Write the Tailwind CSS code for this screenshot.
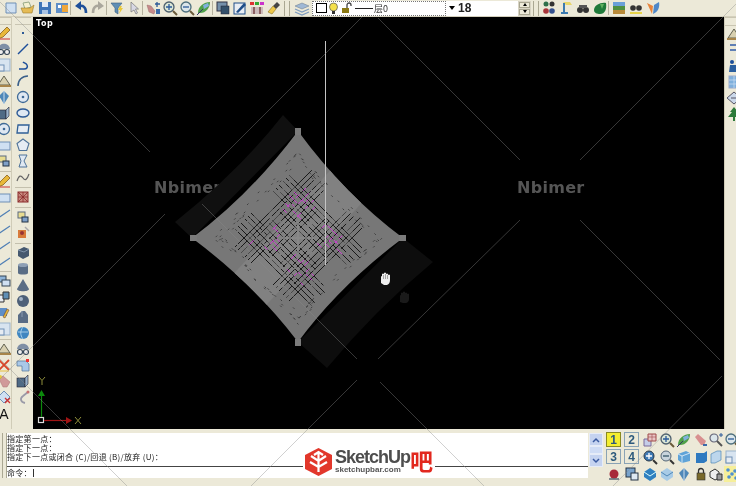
<!DOCTYPE html>
<html lang="en">
<head>
<meta charset="UTF-8">
<title>CAD</title>
<script src="https://cdn.jsdelivr.net/npm/@tailwindcss/browser@4"></script>
</head>
<body class="bg-[#ece9d8]">
<div class="relative w-[736px] h-[486px] overflow-hidden flex flex-col bg-[#ece9d8] font-['Liberation_Sans',sans-serif] blur-[0.4px]">

  <!-- top toolbar -->
  <div class="h-[17px] flex items-center pl-[2px] border-b border-[#d4d0bd]">
    <div id="t1" class="flex"></div><div class="w-[2px] h-[14px] border-l border-[#b5b19e] border-r-white"></div>
    <div id="t2" class="flex"></div><div class="w-[2px] h-[14px] border-l border-[#b5b19e]"></div>
    <div id="t3" class="flex"></div><div class="w-[2px] h-[14px] border-l border-[#b5b19e]"></div>
    <div id="t4" class="flex"></div><div class="w-[2px] h-[14px] border-l border-[#b5b19e]"></div>
    <div id="t5" class="flex"></div>
    <div class="w-[2px]"></div>
    <div class="w-[6px] h-[15px] border-x border-[#aaa792]"></div>
    <div class="w-[3px]"></div>
    <div id="t6" class="flex"></div>
    <div class="w-[2px]"></div>
    <div class="w-[134px] h-[15px] flex items-center bg-white border border-dotted border-[#777] pl-[3px] gap-[1px]">
      <span class="w-[11px] h-[10px] bg-white border border-black"></span>
      <svg class="w-[11px] h-[13px]" viewBox="0 0 11 13"><circle cx="5.5" cy="5" r="4" fill="#f4e04a" stroke="#555" stroke-width=".7"/><rect x="4" y="9" width="3" height="3" fill="#333"/></svg>
      <svg class="w-[12px] h-[12px] ml-[1px]" viewBox="0 0 12 12"><rect x="1" y="6" width="7" height="5" fill="#8c7a14"/><path d="M6 6V3a2 2 0 0 1 4 0v1" fill="none" stroke="#444" stroke-width="1.3"/></svg>
      <span class="w-[18px] h-px bg-[#222] ml-[1px]"></span>
      <span class="text-[9px] leading-none text-[#333] font-['Noto_Sans_CJK_SC',sans-serif]">层0</span>
    </div>
    <div class="w-[72px] h-[15px] flex items-center bg-white pl-[3px] gap-[3px]">
      <span class="w-0 h-0 border-x-[3px] border-x-transparent border-t-[4px] border-t-black"></span>
      <span class="text-[12px] leading-none font-bold text-[#222]">18</span>
    </div>
    <div class="w-[13px] h-[15px] flex flex-col gap-px bg-[#d8d4c4] p-px">
      <span class="flex-1 flex items-center justify-center bg-[#ece9d8] border border-[#aaa792]"><span class="w-0 h-0 border-x-[2px] border-x-transparent border-b-[3px] border-b-black"></span></span>
      <span class="flex-1 flex items-center justify-center bg-[#ece9d8] border border-[#aaa792]"><span class="w-0 h-0 border-x-[2px] border-x-transparent border-t-[3px] border-t-black"></span></span>
    </div>
    <div class="w-[2px]"></div>
    <div class="w-[6px] h-[15px] border-x border-[#aaa792]"></div>
    <div class="w-px"></div>
    <div id="t7" class="flex"></div><div class="w-[2px] h-[14px] border-l border-[#b5b19e]"></div>
    <div id="t8" class="flex"></div>
  </div>

  <!-- middle -->
  <div class="h-[412px] flex">
    <div class="w-[33px] flex">
      <div class="w-[11px] overflow-hidden flex flex-col">
        <div class="h-[8px] border-y border-[#c9c5b2] shrink-0"></div>
        <div id="l1" class="flex flex-col -ml-[4px] w-[16px]"></div>
      </div>
      <div class="w-[4px] border-l border-[#d0ccb8]"></div>
      <div class="w-[16px] flex flex-col">
        <div class="h-[8px] border-y border-[#c9c5b2] shrink-0"></div>
        <div id="l2" class="flex flex-col"></div>
      </div>
    </div>
    <div class="relative flex-1 bg-black overflow-hidden">
      <span class="absolute left-[3px] top-[1px] text-[8px] leading-[11px] font-bold tracking-[0.5px] text-white font-['DejaVu_Sans',sans-serif]">Top</span>
      <span class="absolute left-[121px] top-[162px] text-[16px] leading-[18px] font-['DejaVu_Sans',sans-serif] font-bold tracking-[0.3px] text-[#555]">Nbimer</span>
      <span class="absolute left-[484px] top-[162px] text-[16px] leading-[18px] font-['DejaVu_Sans',sans-serif] font-bold tracking-[0.3px] text-[#555]">Nbimer</span>
      <svg id="art" class="absolute left-[-33px] top-[-17px]" width="736" height="486" viewBox="0 0 736 486">
        <defs><clipPath id="sheet"><path d="M298 131Q345 195 403 238 340 285 298 342 255 285 192 238 250 195 298 131Z"/></clipPath></defs>
        <path d="M283 115Q240 170 175 222L192 238 298 131Z" fill="#101010"/>
        <path d="M403 238 433 262Q375 310 327 368L298 342Z" fill="#0d0d0d"/>
        <path d="M298 131Q345 195 403 238 340 285 298 342 255 285 192 238 250 195 298 131Z" fill="#777"/>
        <path d="M340 160 372 192 256 316 224 284Z" fill="#818181" clip-path="url(#sheet)"/>
        <g id="hatch"></g>
        <g fill="#7b7b7b"><rect x="295" y="128" width="6" height="7"/><rect x="295" y="339" width="6" height="7"/><rect x="190" y="235" width="7" height="6"/><rect x="399" y="235" width="7" height="6"/></g>
        <line x1="325.500" y1="41" x2="325.500" y2="265" stroke="#c4c4c4" stroke-width="1"/>
        <path d="M381 283v-6q0-1 1-1v-2q1-1 2 0v-1q1-1 2 0v1q1-1 2 0v1q1-1 2 0v5q0 4-3 5h-3z" fill="#eee"/>
        <path d="M383.500 275v4M385.500 274v5M387.500 275v4" stroke="#777" stroke-width=".6"/>
        <path d="M400 302v-6q0-1 1-1v-2q1-1 2 0v-1q1-1 2 0v1q1-1 2 0v1q1-1 2 0v5q0 3-3 4h-3z" fill="#1a1a1a"/>
        <g fill="none">
          <rect x="38.500" y="417.500" width="5" height="5" stroke="#ddd" stroke-width="1.200"/>
          <path d="M41.500 417V394" stroke="#0c8a0c" stroke-width="1.200"/><path d="M38 396l3.500-6 3.500 6z" fill="#0c8a0c"/>
          <path d="M44 420.500H68" stroke="#a01414" stroke-width="1.200"/><path d="M66 417l6 3.500-6 3.500z" fill="#a01414"/>
          <path d="M39 377l3 3.500 3-3.500M42 380.500V385M75 417l6 7M81 417l-6 7" stroke="#8d8d3a" stroke-width="1"/>
        </g>
      </svg>
    </div>
    <div class="w-[12px] flex flex-col border-l border-[#d0ccb8]">
      <div class="h-[9px] border-y border-[#c9c5b2] shrink-0"></div>
      <div id="r1" class="flex flex-col pl-px"></div>
    </div>
  </div>

  <!-- bottom -->
  <div class="h-[57px] flex">
    <div class="w-[588px] pt-[4px] pl-[2px] flex shrink-0">
      <div class="w-[5px] h-[45px] border-x border-[#aaa792]"></div>
      <div class="flex-1 h-[45px] flex flex-col bg-white text-[8px] leading-[9px] tracking-[0.3px] text-[#222] font-['Noto_Sans_CJK_SC',sans-serif]">
        <div class="h-[34px] pt-px border-b border-[#444]">
          <div>指定第一点：</div><div>指定下一点：</div><div>指定下一点或闭合 (C)/回退 (B)/放弃 (U)：</div>
        </div>
        <div class="flex items-center h-[11px]"><span>命令：</span><span class="w-px h-[8px] bg-[#333] ml-px"></span></div>
      </div>
    </div>
    <div class="w-[16px] pt-[4px] pl-[1px]">
      <div class="w-[14px] h-[34px] flex flex-col items-center justify-between bg-[#e6ecf8] py-[1px]">
        <span class="w-[12px] h-[11px] flex items-center justify-center bg-[#c5d3f0]"><svg class="w-[8px] h-[6px]" viewBox="0 0 8 6"><path d="M1 5l3-3 3 3" fill="none" stroke="#3a5aa0" stroke-width="1.500"/></svg></span>
        <span class="w-[12px] h-[6px] bg-[#cfdcf5]"></span>
        <span class="w-[12px] h-[11px] flex items-center justify-center bg-[#c5d3f0]"><svg class="w-[8px] h-[6px]" viewBox="0 0 8 6"><path d="M1 1l3 3 3-3" fill="none" stroke="#3a5aa0" stroke-width="1.500"/></svg></span>
      </div>
    </div>
    <div class="flex-1 pt-[3px] pl-[3px] grid grid-cols-[18px_18px_17px_17px_17px_15px_16px_16px] grid-rows-[17px_17px_17px]" id="grid"></div>
  </div>

  <!-- logo over the command window -->
  <div class="absolute left-[303px] top-[447px] flex items-start bg-white pr-[2px]">
    <svg class="w-[31px] h-[30px]" viewBox="0 0 31 30">
      <path d="M15.500 1 29 8v14l-13.500 7L2 22V8z" fill="#e2372b"/>
      <path d="M15.500 5v20M8 9l7.500 5L23 9M7 15l8.500 5L24 15M11 8l4.500-3 4.500 3" fill="none" stroke="#fff" stroke-width="2.200"/>
    </svg>
    <div class="flex flex-col w-[75px] ml-[1px] mt-[1px]">
      <span class="text-[18px] leading-[18px] font-bold tracking-[-1px] text-[#4d4d4d]">SketchUp</span>
      <span class="text-[8px] leading-[8px] font-bold text-[#555]">sketchupbar.com</span>
    </div>
    <span class="text-[23px] leading-[27px] font-bold text-[#e2281e] font-['Noto_Sans_CJK_SC',sans-serif]">吧</span>
  </div>

  <svg id="marks" class="absolute left-0 top-0 pointer-events-none" width="736" height="486" viewBox="0 0 736 486" stroke="#8a8a8a" stroke-opacity=".5" stroke-width=".8" fill="none">
    <path d="M0 2 150 152M202 204 357 359M380 382 484 486M0 379 165 214M210 169 362 17M378 18 520 160M580 220 720 360M740 0 580 160M520 220 378 359M357 380 251 486M722 376 613 486M0 359 127 486"/>
  </svg>
</div>

<script>
const ic = {
  page: '<path d="M3 3h10v10H3z" fill="#cfe0f2" stroke="#6f8fb5"/>',
  open: '<path d="M3 3l6-1 2 5-6 2z" fill="#f4f0d0" stroke="#9a8"/><path d="M1 8h9l4-3-2 8H3z" fill="#e5bb55" stroke="#9a7a2a" stroke-width=".6"/>',
  save: '<rect x="2" y="2" width="12" height="12" fill="#3d74b8"/><rect x="5" y="2" width="6" height="5" fill="#dfe9f5"/><rect x="5" y="10" width="6" height="4" fill="#a9c3e2"/>',
  plot: '<rect x="2" y="3" width="12" height="10" fill="#5f8fc8"/><rect x="8" y="5" width="6" height="7" fill="#eea63a"/><rect x="4" y="5" width="3" height="3" fill="#fff"/>',
  undo: '<path d="M13 13C13 7 10 5 6 6" fill="none" stroke="#1d4f9a" stroke-width="2.600"/><path d="M8 1v9L2 6z" fill="#1d4f9a"/>',
  redo: '<path d="M3 13C3 7 6 5 10 6" fill="none" stroke="#aaa79c" stroke-width="2.600"/><path d="M8 1v9l6-4z" fill="#aaa79c"/>',
  funnel: '<path d="M2 3h11L9 8v6L6 12V8z" fill="#5f8fb5" stroke="#3d5f80" stroke-width=".6"/><path d="M11 6l-2 4h2l-1 4 4-6h-2l1-2z" fill="#e8c93a"/>',
  arrow: '<path d="M5 2v10l3-2 2 4 1.500-1-2-4h3z" fill="#d8d8e4" stroke="#777" stroke-width=".7"/>',
  hand: '<path d="M2 5l4 1 4 5-1 3-5-2z" fill="#c78a8a" stroke="#9a6a6a" stroke-width=".5"/><path d="M11 9h4v5h-4z" fill="#3b6aa8"/><path d="M12 2v5M10 4h5" stroke="#2d5a96" stroke-width="1.300"/>',
  zoomw: '<circle cx="7" cy="7" r="5" fill="#dbe6d6" stroke="#4d5f6d" stroke-width="1.300"/><path d="M11 11l4 4" stroke="#6a5a3a" stroke-width="2"/><path d="M7 4v6M4 7h6" stroke="#2b5a9a" stroke-width="1.300"/>',
  zoomm: '<circle cx="7" cy="7" r="5" fill="#dbe6ea" stroke="#4d6f7d" stroke-width="1.300"/><path d="M11 11l4 4" stroke="#6a5a3a" stroke-width="2"/><path d="M4 7h6" stroke="#2b5a9a" stroke-width="1.300"/>',
  leaf: '<path d="M2 13C2 6 8 2 14 2c0 6-4 11-10 11z" fill="#4fa04a"/><path d="M7 5l5-2 1 3-5 3z" fill="#7fb0dd"/><path d="M1 15 7 9" stroke="#336" stroke-width="1"/>',
  props: '<rect x="2" y="2" width="10" height="9" fill="#7590ab" stroke="#334"/><rect x="6" y="6" width="8" height="8" fill="#34506b" stroke="#223" stroke-width=".5"/>',
  edit: '<rect x="2" y="3" width="11" height="11" fill="#e8edf4" stroke="#1f4e88"/><path d="M4 12l8-9 2 2-8 8z" fill="#1f4e88"/>',
  color: '<g><rect x="1" y="2" width="4" height="3" fill="#d33"/><rect x="6" y="2" width="4" height="3" fill="#3a3"/><rect x="11" y="2" width="4" height="3" fill="#c3c"/></g><path d="M2 7h12v7H2z" fill="#cbb"/><path d="M5 7v7M11 7v7" stroke="#744" stroke-width="1.500"/>',
  brush: '<path d="M11 2l3 3-4 4-3-3z" fill="#444"/><path d="M7 6l3 3-4 5-4-2z" fill="#eec84a" stroke="#8a7020" stroke-width=".6"/>',
  layers: '<path d="M8 3l7 3-7 3-7-3z" fill="#9fb8d5" stroke="#678" stroke-width=".5"/><path d="M1 9l7 3 7-3M1 12l7 3 7-3" fill="none" stroke="#7f9cbf" stroke-width="1.300"/>',
  balls: '<circle cx="5" cy="4" r="2.500" fill="#2f6f4a"/><circle cx="11" cy="4" r="2.500" fill="#333"/><circle cx="5" cy="11" r="2.800" fill="#a8343a"/><circle cx="11" cy="11" r="2.800" fill="#33508f"/>',
  lamp: '<path d="M5 2h7l2 3H8z" fill="#e8d66a"/><path d="M6 3v9M3 13h7" stroke="#3b7ab0" stroke-width="2"/>',
  bino: '<circle cx="5" cy="10" r="3" fill="#333"/><circle cx="11" cy="10" r="3" fill="#333"/><rect x="4" y="5" width="8" height="3" fill="#555"/>',
  bush: '<path d="M2 10c0-5 7-8 12-7 1 6-1 11-6 11-3 0-6-1-6-4z" fill="#1f7a3a"/><path d="M8 4l4 0-2 5z" fill="#5fb060"/>',
  land: '<rect x="2" y="2" width="12" height="4" fill="#6aa0d8"/><rect x="2" y="6" width="12" height="4" fill="#4f9040"/><rect x="2" y="10" width="12" height="4" fill="#b88a3a"/>',
  binoy: '<circle cx="5" cy="8" r="2.800" fill="#333"/><circle cx="11" cy="8" r="2.800" fill="#333"/><path d="M2 13h12" stroke="#e8d44a" stroke-width="2"/>',
  wing: '<path d="M2 3l5 11 1-8z" fill="#e8843a"/><path d="M8 14l1-9 5-3c1 5-1 10-6 12z" fill="#4f88c8"/>',
  pt: '<rect x="7" y="7" width="2" height="2" fill="#2d5a96"/>',
  line: '<path d="M3 13 13 3" stroke="#1d4f9a" stroke-width="1.500"/>',
  pline: '<path d="M4 12h5c3 0 4-2 3-4s-3-2-4-3" fill="none" stroke="#1d4f9a" stroke-width="1.500"/>',
  arc: '<path d="M3 13C3 7 7 3 13 3" fill="none" stroke="#3a5f8a" stroke-width="1.500"/>',
  circle: '<circle cx="8" cy="8" r="5.500" fill="#dfe8f2" stroke="#3f6a96" stroke-width="1.300"/><circle cx="8" cy="8" r="1.300" fill="#3f6a96"/>',
  ell: '<ellipse cx="8" cy="8" rx="6" ry="4" fill="#dfe8f2" stroke="#2d5a96" stroke-width="1.400"/>',
  rect: '<path d="M3 4h11l-1 8H2z" fill="#e6ecf3" stroke="#2f5f96" stroke-width="1.300"/>',
  poly: '<path d="M8 2l6 4.500-2.300 7H4.300L2 6.500z" fill="#e6ecf3" stroke="#4f7399" stroke-width="1.100"/>',
  spl: '<path d="M4 2h8L9 8l3 6H4l2-6z" fill="#dfe8f2" stroke="#4f7399" stroke-width="1"/>',
  wave: '<path d="M2 12c2-6 4-6 6-3s4 2 6-4" fill="none" stroke="#666" stroke-width="1.200"/>',
  hatchi: '<rect x="3" y="3" width="10" height="10" fill="#c88a80" stroke="#8a2a2a"/><path d="M3 8h10M8 3v10M3 3l10 10M13 3 3 13" stroke="#8a2a2a" stroke-width=".8"/>',
  blk: '<rect x="3" y="3" width="7" height="6" fill="#e8dc90" stroke="#5a6a80"/><rect x="7" y="8" width="6" height="5" fill="#7fa0c8" stroke="#234"/>',
  ins: '<rect x="3" y="5" width="8" height="8" fill="#d87a3a"/><circle cx="7" cy="8" r="2" fill="#933"/><path d="M10 2l4 4" stroke="#aaa" stroke-width="1.500"/>',
  box: '<path d="M3 5l6-3 5 2v7l-6 3-5-3z" fill="#45586f"/><path d="M3 5l6 2 5-3" fill="none" stroke="#7f93aa"/>',
  cyl: '<path d="M3 4h10v8c0 2-10 2-10 0z" fill="#5a6d85"/><ellipse cx="8" cy="4" rx="5" ry="2" fill="#8fa0b5"/>',
  cone: '<path d="M8 2l6 10c0 3-12 3-12 0z" fill="#5a6d85"/>',
  sph: '<circle cx="8" cy="8" r="6" fill="#4d6078"/><circle cx="6" cy="6" r="2" fill="#a5b5c8"/>',
  wedge: '<path d="M3 14V6l4-4h3l3 4v8z" fill="#5a6d85"/><path d="M7 2v6" stroke="#8a9bb0"/>',
  globe: '<circle cx="8" cy="8" r="6" fill="#3f86c0"/><path d="M3 7h10M8 2c-3 4-3 8 0 12" stroke="#bcdcf0" fill="none" stroke-width=".8"/>',
  rings: '<path d="M2 8c1-7 11-7 12 0" fill="#7f8fa5"/><circle cx="5" cy="11" r="2.500" fill="#eee" stroke="#345" stroke-width="1.100"/><circle cx="11" cy="11" r="2.500" fill="#eee" stroke="#345" stroke-width="1.100"/>',
  corner: '<path d="M2 4h9l3 3v7H7V9H2z" fill="#a9c8e8" stroke="#4f7399" stroke-width=".7"/><rect x="11" y="2" width="3" height="3" fill="#e33"/>',
  cube2: '<rect x="2" y="5" width="8" height="9" fill="#4f6a85" stroke="#223" stroke-width=".6"/><path d="M10 5l3-3v9l-3 3z" fill="#9ab3cc" stroke="#223" stroke-width=".6"/>',
  hook: '<path d="M13 3 8 7c-3 2-3 6 2 7" fill="none" stroke="#9a9aa8" stroke-width="1.800"/><circle cx="13" cy="3" r="1.500" fill="#c87070"/>',
  pencil: '<path d="M2 14l2-5 7-7 3 3-7 7z" fill="#e8b83a" stroke="#7a4f10" stroke-width=".7"/><path d="M2 14h12" stroke="#c33" stroke-width="1"/>',
  dim: '<rect x="2" y="5" width="12" height="8" fill="#cfe0f2" stroke="#6f8fb5"/>',
  arcs: '<path d="M2 13 14 5" stroke="#4f7fb5" stroke-width="1.200"/>',
  copy: '<rect x="2" y="3" width="8" height="6" fill="#8fb4d8" stroke="#345"/><rect x="6" y="7" width="8" height="6" fill="#cfe0f2" stroke="#345"/>',
  cubes: '<path d="M2 6h6v7H2z" fill="#e6ecf3" stroke="#333"/><path d="M7 3h6v7H7z" fill="#5f8fb5" stroke="#333"/>',
  yellowp: '<rect x="2" y="3" width="9" height="8" fill="#5f8fc8"/><path d="M7 12l4-8 2 1-4 8z" fill="#e8b83a" stroke="#533" stroke-width=".5"/>',
  boxes: '<rect x="2" y="2" width="12" height="12" fill="#d8e4f0" stroke="#9ab3cc"/><rect x="2" y="8" width="6" height="6" fill="#e6ecf3" stroke="#6f8fb5"/>',
  hat: '<path d="M2 12 8 3l6 9z" fill="#d8d0b0" stroke="#554" stroke-width=".9"/><path d="M1 13h14" stroke="#a8854a" stroke-width="2"/>',
  xx: '<path d="M3 3l10 10M13 3 3 13" stroke="#d8462a" stroke-width="1.800"/><path d="M3 14h10" stroke="#e8c040" stroke-width="1"/>',
  erase: '<path d="M3 6l4-3 7 6-3 5H7z" fill="#d09a9a" stroke="#a87070" stroke-width=".5"/><circle cx="4" cy="4" r="2" fill="#e8c83a"/>',
  diax: '<path d="M8 2l6 6-6 6-6-6z" fill="#cfe0f2" stroke="#6f8fb5"/><path d="M9 9l5 5M14 9l-5 5" stroke="#c33" stroke-width="1.300"/>',
  aa: '<text x="8" y="14" text-anchor="middle" font-size="14" font-family="Liberation Sans" fill="#111">A</text>',
  red: '<circle cx="8" cy="8" r="4.500" fill="#a82a3a"/><path d="M3 13h10" stroke="#456" stroke-width="1.300"/>',
  pic: '<rect x="2" y="2" width="9" height="9" fill="#79a3cc" stroke="#234"/><rect x="7" y="7" width="7" height="7" fill="#dde8f2" stroke="#234"/>',
  dia1: '<path d="M8 2l6 4v5l-6 4-6-4V6z" fill="#2f80c0"/><path d="M2 6l6 4 6-4" fill="none" stroke="#dff"/>',
  dia2: '<path d="M8 2l6 4v5l-6 4-6-4V6z" fill="#a8cbe6"/><path d="M2 6l6 4 6-4" fill="none" stroke="#4f88b8"/>',
  dia3: '<path d="M8 2l5 5-5 8-5-8z" fill="#4f88b8"/><path d="M8 2v13" stroke="#cde"/>',
  lock: '<rect x="4" y="7" width="8" height="7" fill="#7a6a2a" stroke="#333" stroke-width=".6"/><path d="M5.500 7V5a2.500 2.500 0 0 1 5 0v2" fill="none" stroke="#333" stroke-width="1.300"/>',
  wire: '<path d="M2 6l5-3 4 3v6l-4 2-5-3z" fill="#eee" stroke="#333"/><path d="M9 8h5v6H9z" fill="#999" stroke="#333"/>',
  dots: '<circle cx="4" cy="4" r="1.800" fill="#4f90d0"/><circle cx="11" cy="5" r="1.800" fill="#4f90d0"/><circle cx="5" cy="11" r="1.800" fill="#4f90d0"/><circle cx="12" cy="12" r="1.800" fill="#4f90d0"/><circle cx="8" cy="8" r="1.800" fill="#4f90d0"/>',
  cube3: '<path d="M2 5l8-3 4 2v8l-8 2-4-3z" fill="#5fa3d8"/><path d="M6 7l8-3M6 7v7M6 7 2 5" stroke="#fff" fill="none" stroke-width=".7"/>',
  cube4: '<path d="M3 4h8l3-2v10l-3 2H3z" fill="#2f7ac0"/>',
  cube5: '<path d="M3 5l6-3h4v9l-6 3H3z" fill="#bcd6ec" stroke="#4f88b8" stroke-width=".7"/>',
  rcube: '<path d="M2 7h7v7H2z" fill="#c5cde8" stroke="#7a6a9a"/><path d="M6 2h8v7H6z" fill="#e8c5c5" stroke="#a04a4a"/><path d="M10 2v7M6 5h8" stroke="#a04a4a" stroke-width=".6"/>',
  pink: '<path d="M2 5l3-3 8 7-2 4H8z" fill="#d88f8f"/><path d="M10 12h4v2h-4z" fill="#3b6aa8"/>',
  zoomp: '<circle cx="6" cy="6" r="4" fill="#dbe6ea" stroke="#667" stroke-width="1.200"/><path d="M9 9l5 5" stroke="#555" stroke-width="2"/><path d="M13 1v4M11 3h4" stroke="#2b5a9a"/>',
  zoomb: '<circle cx="7" cy="7" r="5" fill="#3f7ab5" stroke="#234"/><path d="M7 4v6M4 7h6" stroke="#fff" stroke-width="1.300"/><path d="M11 11l4 4" stroke="#333" stroke-width="2"/>',
  zoomg: '<circle cx="7" cy="7" r="5" fill="#c8d4dc" stroke="#567"/><path d="M4 7h6" stroke="#356" stroke-width="1.300"/><path d="M11 11l4 4" stroke="#333" stroke-width="2"/>',
  figure: '<circle cx="6" cy="4" r="2" fill="#1d4f9a"/><path d="M4 7h6l2 7H3z" fill="#2b5f9f"/><path d="M11 2v6" stroke="#888" stroke-width="2"/>',
  tile: '<rect x="3" y="2" width="10" height="12" fill="#7fb0dd" stroke="#9ac"/><path d="M3 6h10M3 10h10M8 2v12" stroke="#cfe0f2" stroke-width=".7"/>',
  diamond: '<path d="M8 2l7 6-7 6-7-6z" fill="#cbd8ea" stroke="#556"/><path d="M5 8h6" stroke="#556"/>',
  tree: '<path d="M8 1l4 5h-2l4 5H9v4H7v-4H2l4-5H4z" fill="#2d7a3a"/>',
  dash: '<path d="M4 3h8M4 8h8" stroke="#5f7fb5" stroke-width="2"/>'
};
const svg = n => '<svg class="w-[16px] h-[16px] shrink-0" viewBox="0 0 16 16">' + ic[n] + '</svg>';
const fill = (id, names, cell) => {
  document.getElementById(id).innerHTML = names.map(n => cell(n)).join('');
};
const top17 = n => '<span class="w-[17px] h-[16px] flex justify-center">' + svg(n) + '</span>';
fill('t1', ['page','open','save','plot'], top17);
fill('t2', ['undo','redo'], top17);
fill('t3', ['funnel','arrow'], top17);
fill('t4', ['hand','zoomw','zoomm','leaf'], top17);
fill('t5', ['props','edit','color','brush'], top17);
fill('t6', ['layers'], top17);
fill('t7', ['balls','lamp','bino','bush'], top17);
fill('t8', ['land','binoy','wing'], top17);

// left columns, "|" is a separator
const col = n => n === '|'
  ? '<span class="h-[3px] mb-px border-b border-[#c4c0ad]"></span>'
  : '<span class="h-[16px] flex">' + svg(n) + '</span>';
fill('l1', ['pencil','rings','boxes','hat','dia3','cube2','circle','dim','blk','|','pencil','dim','arcs','arcs','arcs','arcs','|','copy','cubes','yellowp','boxes','|','hat','xx','erase','diax','aa'], col);
fill('l2', ['pt','line','pline','arc','circle','ell','rect','poly','spl','wave','|','hatchi','|','blk','ins','|','box','cyl','cone','sph','wedge','globe','rings','corner','cube2','hook'], col);
fill('r1', ['hat','dash','figure','tile','diamond','tree'], n => '<span class="h-[16px] flex">' + svg(n) + '</span>');

const num = (t, on) => '<span class="w-[15px] h-[15px] flex items-center justify-center text-[12px] leading-none font-bold text-[#2d5a7d] border ' + (on ? 'bg-[#f4ee30] border-[#8a8a20]' : 'border-[#8aa3b5]') + '">' + t + '</span>';
const g = [num(1,1),num(2),'rcube','zoomw','leaf','pink','zoomp','zoomm',
           num(3),num(4),'zoomb','zoomg','cube3','cube4','cube5','boxes',
           'red','pic','dia1','dia2','dia3','lock','wire','*'];
document.getElementById('grid').innerHTML = g.map(x => {
  if (x === '*') return '<span class="w-[16px] h-[16px] bg-[#f6ef9a]">' + svg('dots') + '</span>';
  return x.startsWith('<') ? '<span>' + x + '</span>' : '<span>' + svg(x) + '</span>';
}).join('');

// drawing: hatch lines laid out along both diagonals of the sheet
let seed = 7;
const rnd = () => (seed = (seed * 16807) % 2147483647) / 2147483647;
const P = (a, b) => (298 + a + b).toFixed(1) + ' ' + (238 + a - b).toFixed(1);
let h = '';
const seg = (a1, b1, a2, b2, c, w) => { h += '<path d="M' + P(a1, b1) + 'L' + P(a2, b2) + '" stroke="' + c + '" stroke-width="' + w + '"/>'; };
for (const b of [-27,-24,-21,-17,-14,-11,-7,-4,4,7,11,14,17,21,24,27]) {
  const span = Math.abs(b) < 9 ? 22 : 36;
  for (let a = -span; a < span; a += 2.5 + rnd() * 2.5) {
    const len = 2 + rnd() * 4;
    const near = Math.abs(a) > 8 && Math.abs(a) < 28 && Math.abs(b) > 6 && Math.abs(b) < 24;
    const pick = () => near && rnd() < .3 ? '#c43fc8' : rnd() < .72 ? '#191919' : '#4a4a4a';
    seg(a, b, a + len, b, pick(), 1);
    seg(b, a, b, a + len, pick(), 1);
  }
}
for (let t = 0; t < 130; t++) {
  const side = t % 4, s = -42 + rnd() * 84, d = 37 + rnd() * 6;
  const a = side < 2 ? s : (side === 2 ? d : -d), b = side < 2 ? (side === 0 ? d : -d) : s;
  if (side < 2) seg(a, b, a + 1.5, b, '#3a3a3a', .9); else seg(a, b, a, b + 1.5, '#3a3a3a', .9);
}
h += '<path d="M298 222V254M282 238H314" stroke="#8a8a8a" stroke-width="1.600"/>';
document.getElementById('hatch').innerHTML = h;
</script>
</body>
</html>
